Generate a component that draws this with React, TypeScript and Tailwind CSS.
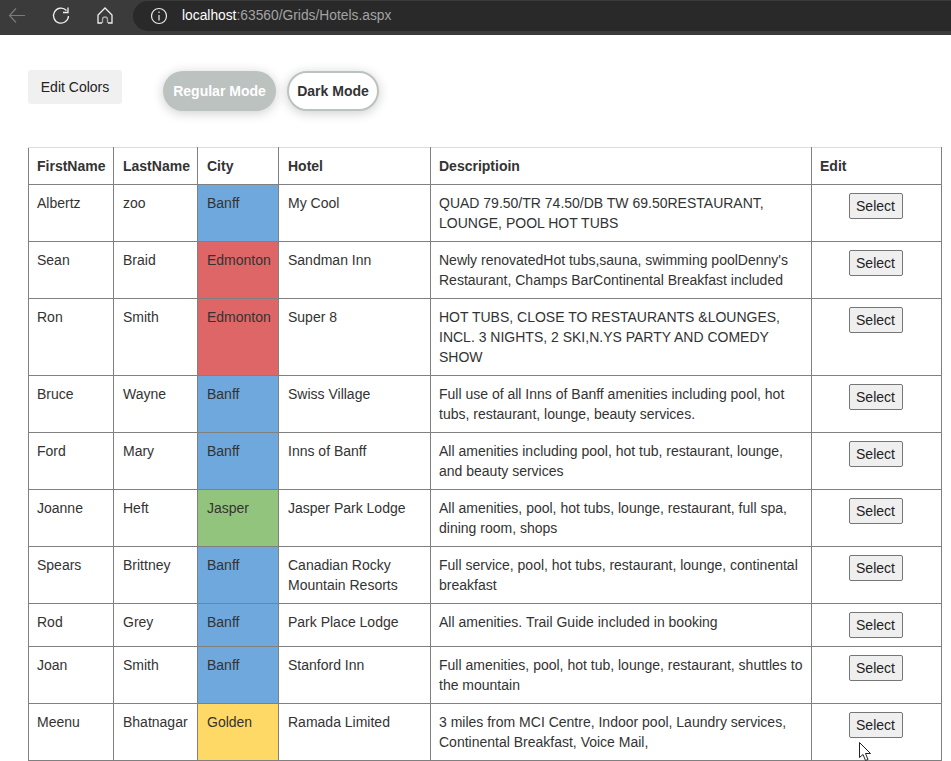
type Row = { first: string; last: string; city: string; hotel: string; desc: string };

const rows: Row[] = [
  { first: "Albertz", last: "zoo", city: "Banff", hotel: "My Cool", desc: "QUAD 79.50/TR 74.50/DB TW 69.50RESTAURANT, LOUNGE, POOL HOT TUBS" },
  { first: "Sean", last: "Braid", city: "Edmonton", hotel: "Sandman Inn", desc: "Newly renovatedHot tubs,sauna, swimming poolDenny's Restaurant, Champs BarContinental Breakfast included" },
  { first: "Ron", last: "Smith", city: "Edmonton", hotel: "Super 8", desc: "HOT TUBS, CLOSE TO RESTAURANTS &LOUNGES, INCL. 3 NIGHTS, 2 SKI,N.YS PARTY AND COMEDY SHOW" },
  { first: "Bruce", last: "Wayne", city: "Banff", hotel: "Swiss Village", desc: "Full use of all Inns of Banff amenities including pool, hot tubs, restaurant, lounge, beauty services." },
  { first: "Ford", last: "Mary", city: "Banff", hotel: "Inns of Banff", desc: "All amenities including pool, hot tub, restaurant, lounge, and beauty services" },
  { first: "Joanne", last: "Heft", city: "Jasper", hotel: "Jasper Park Lodge", desc: "All amenities, pool, hot tubs, lounge, restaurant, full spa, dining room, shops" },
  { first: "Spears", last: "Brittney", city: "Banff", hotel: "Canadian Rocky Mountain Resorts", desc: "Full service, pool, hot tubs, restaurant, lounge, continental breakfast" },
  { first: "Rod", last: "Grey", city: "Banff", hotel: "Park Place Lodge", desc: "All amenities. Trail Guide included in booking" },
  { first: "Joan", last: "Smith", city: "Banff", hotel: "Stanford Inn", desc: "Full amenities, pool, hot tub, lounge, restaurant, shuttles to the mountain" },
  { first: "Meenu", last: "Bhatnagar", city: "Golden", hotel: "Ramada Limited", desc: "3 miles from MCI Centre, Indoor pool, Laundry services, Continental Breakfast, Voice Mail," },
];

function cityColor(city: string) {
  if (city === "Edmonton") return "bg-[#de6666]";
  if (city === "Jasper") return "bg-[#93c47d]";
  if (city === "Golden") return "bg-[#ffd966]";
  return "bg-[#6fa8dc]";
}

const th = "border border-[#808080] border-t-[#dddddd] p-2 text-left align-top font-bold";
const td = "border border-[#808080] p-2 align-top";

export default function App() {
  return (
    <div className="relative h-[761px] overflow-hidden bg-white font-['Liberation_Sans',Arial,sans-serif] text-sm leading-5 text-[#333333]">
      <div className="flex h-[35px] items-center bg-[#3b3b3b] pb-[3px]">
        <svg className="ml-[5px]" width="24" height="24" viewBox="0 0 24 24" fill="none" stroke="#7a7a7a" strokeWidth="1.2">
          <path d="M20 11.5H4.5M11 4.5L4.5 11.5L11 18.5" />
        </svg>
        <svg className="ml-[20px]" width="24" height="24" viewBox="0 0 24 24" fill="none" stroke="#f0f0f0" strokeWidth="1.3">
          <path d="M17.5 6.5A7.5 7.5 0 1 0 19.5 12M19 3.5V8.5H14" />
        </svg>
        <svg className="ml-[20px]" width="24" height="24" viewBox="0 0 24 24" fill="none" strokeWidth="1.3">
          <path d="M9 19H5V11L12 4L19 11V19H15" stroke="#f0f0f0" />
          <path d="M9.5 19V15.5A2.5 2.5 0 0 1 14.5 15.5V19" stroke="#a8a8a8" />
        </svg>
        <div className="ml-[16px] flex h-[30px] flex-1 items-center rounded-l-[15px] bg-[#292929] pl-[14px] text-[13.8px]">
          <svg width="24" height="24" viewBox="0 0 24 24" fill="none" stroke="#e8e8e8" strokeWidth="1.2">
            <circle cx="12" cy="12" r="7.5" />
            <path d="M12 11V16.5M12 7.5V9" />
          </svg>
          <span className="ml-[11px] text-white">localhost</span>
          <span className="text-[#a3a3a3]">:63560/Grids/Hotels.aspx</span>
        </div>
      </div>

      <div className="flex items-start pl-[28px] pt-[35px]">
        <button className="h-[34px] w-[94px] rounded-[3px] bg-[#f0f0f0] text-sm text-[#222222]">Edit Colors</button>
        <button className="ml-[41px] mt-[1px] h-[40px] w-[113px] rounded-[20px] bg-[#bcc2bf] text-sm font-bold text-white shadow-[0_2px_12px_rgba(0,0,0,0.2)]">
          Regular Mode
        </button>
        <button className="ml-[11px] mt-[1px] h-[40px] w-[92px] rounded-[20px] border-2 border-[#bcc2bf] bg-white text-sm font-bold text-[#333333] shadow-[0_2px_12px_rgba(0,0,0,0.2)]">
          Dark Mode
        </button>
      </div>

      <div className="pl-[28px] pt-[36px]">
        <table className="w-[913px] table-fixed border-collapse">
          <colgroup>
            <col className="w-[85px]" />
            <col className="w-[84px]" />
            <col className="w-[81px]" />
            <col className="w-[152px]" />
            <col className="w-[381px]" />
            <col className="w-[130px]" />
          </colgroup>
          <thead>
            <tr>
              <th className={th}>FirstName</th>
              <th className={`${th} pl-[9px]`}>LastName</th>
              <th className={`${th} pl-[9px]`}>City</th>
              <th className={`${th} pl-[9px]`}>Hotel</th>
              <th className={th}>Descriptioin</th>
              <th className={th}>Edit</th>
            </tr>
          </thead>
          <tbody>
            {rows.map((r, i) => (
              <tr key={i}>
                <td className={td}>{r.first}</td>
                <td className={`${td} pl-[9px]`}>{r.last}</td>
                <td className={`${td} pl-[9px] ${cityColor(r.city)}`}>{r.city}</td>
                <td className={`${td} pl-[9px]`}>{r.hotel}</td>
                <td className={td}>{r.desc}</td>
                <td className={`${td} pr-[10px] text-center`}>
                  <button className="h-[26px] w-[54px] rounded-[2px] border border-[#767676] bg-[#efefef] text-sm text-[#222222]">
                    Select
                  </button>
                </td>
              </tr>
            ))}
          </tbody>
        </table>
      </div>

      {/* mouse pointer from the capture */}
      <svg className="absolute left-[858px] top-[741px]" width="15" height="21" viewBox="0 0 15 21">
        <path d="M1.5 1.5V16.5L5 13.5L7.5 19.5L10 18.5L7.5 12.5H12.5Z" fill="#ffffff" stroke="#222222" strokeWidth="1" />
      </svg>
    </div>
  );
}
